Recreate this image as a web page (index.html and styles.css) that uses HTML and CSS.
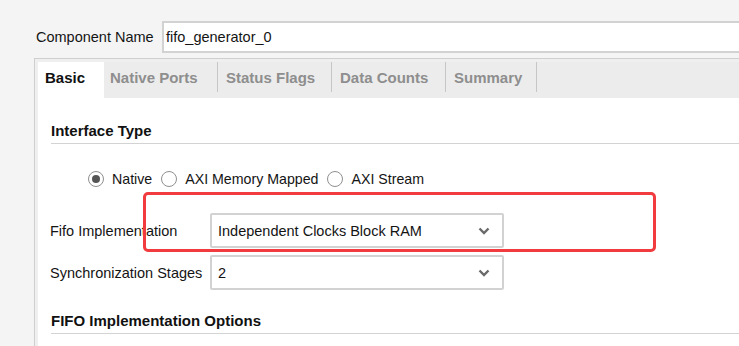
FILE: index.html
```html
<!DOCTYPE html>
<html lang="en">
<head>
  <meta charset="UTF-8">
  <title>FIFO Generator - Customize IP</title>
  <link rel="stylesheet" href="styles.css">
</head>
<body>
<div class="page">
  <!-- Component name -->
  <div class="name-row">
    <label class="name-label" for="compName">Component Name</label>
    <div class="name-input">fifo_generator_0</div>
  </div>

  <!-- Tabbed panel -->
  <div class="panel">
    <div class="tabs">
      <div class="tab active">Basic</div>
      <div class="tab">Native Ports</div>
      <div class="tab">Status Flags</div>
      <div class="tab">Data Counts</div>
      <div class="tab last">Summary</div>
    </div>

    <div class="tab-body">
      <h2 class="section-title">Interface Type</h2>

      <div class="radio-row">
        <label class="radio-item"><span class="radio checked"></span>Native</label>
        <label class="radio-item"><span class="radio"></span>AXI Memory Mapped</label>
        <label class="radio-item"><span class="radio"></span>AXI Stream</label>
      </div>

      <div class="form-grid">
        <div class="form-label">Fifo Implementation</div>
        <div class="select">
          <span>Independent Clocks Block RAM</span>
          <svg class="chevron" width="12" height="8" viewBox="0 0 12 8"><polyline points="1.5,1.5 6,6 10.5,1.5" fill="none" stroke="#6a6a6a" stroke-width="2.4"/></svg>
        </div>

        <div class="form-label">Synchronization Stages</div>
        <div class="select">
          <span>2</span>
          <svg class="chevron" width="12" height="8" viewBox="0 0 12 8"><polyline points="1.5,1.5 6,6 10.5,1.5" fill="none" stroke="#6a6a6a" stroke-width="2.4"/></svg>
        </div>
      </div>

      <h2 class="section-title second">FIFO Implementation Options</h2>
    </div>
  </div>

  <!-- highlight annotation -->
  <div class="highlight"></div>
</div>
</body>
</html>
```

FILE: styles.css
```css
* {
  margin: 0;
  padding: 0;
  box-sizing: border-box;
  font-family: 'Liberation Sans', Arial, sans-serif;
}

body {
  background-color: #f4f4f4;
  color: #141414;
  font-size: 14.5px;
}

.page {
  width: 739px;
  height: 346px;
  overflow: hidden;
  position: relative;
}

/* Component name row */
.name-row {
  display: flex;
  align-items: flex-start;
  padding: 21px 0 0 36px;
  height: 58px;
  margin-right: -20px;
}

.name-label {
  flex-shrink: 0;
  line-height: 32px;
  width: 126px;
}

.name-input {
  flex: 1;
  height: 32px;
  line-height: 28px;
  border: 2px solid #d2d2d2;
  border-right: none;
  background: #fff;
  padding: 0 2px;
  color: #141414;
}

/* Panel */
.panel {
  margin: 0 -20px 0 34px;
  border-top: 1px solid #cfcfcf;
  border-left: 1px solid #cfcfcf;
  padding: 3px 0 0 3px;
  background-color: #efefef;
  height: 300px;
}

.tabs {
  display: flex;
  align-items: flex-start;
  height: 36px;
  background-color: #ececec;
}

.tab {
  height: 30px;
  padding-left: 8px;
  width: 114px;
  font-size: 15px;
  font-weight: 700;
  color: #8e8e8e;
  line-height: 32px;
  border-right: 1px solid #c6c6c6;
}

.tab.active {
  width: 66px;
  height: 36px;
  padding-left: 7px;
  background-color: #fff;
  color: #111;
  border-right: none;
}

.tab.active + .tab {
  padding-left: 6px;
}

.tab.last {
  width: 91px;
}

.tab-body {
  background-color: #fff;
  height: 260px;
  padding-left: 13px;
}

.section-title {
  font-size: 15px;
  font-weight: 700;
  line-height: 18px;
  padding: 24px 0 3px;
  border-bottom: 1px solid #d3d3d3;
  color: #111;
}

.section-title.second {
  padding-top: 22px;
}

/* Radio buttons */
.radio-row {
  display: flex;
  gap: 9px;
  margin: 25px 0 0 37px;
  line-height: 20px;
  font-size: 14.2px;
}

.radio-item {
  display: flex;
  align-items: center;
}

.radio {
  width: 16px;
  height: 16px;
  border-radius: 50%;
  border: 1px solid #8f8f8f;
  background: #fff;
  margin-right: 8px;
  display: flex;
  align-items: center;
  justify-content: center;
}

.radio.checked::after {
  content: "";
  width: 8px;
  height: 8px;
  border-radius: 50%;
  background-color: #555;
}

/* Form fields */
.form-grid {
  display: grid;
  grid-template-columns: 160px 294px;
  row-gap: 7px;
  margin: 24px 0 0 -1px;
  align-items: center;
}

.select {
  height: 35px;
  border: 2px solid #d2d2d2;
  border-radius: 2px;
  display: flex;
  align-items: center;
  justify-content: space-between;
  padding: 0 12px 0 6px;
}

.chevron {
  display: block;
}

/* Red annotation box */
.highlight {
  position: absolute;
  left: 143px;
  top: 192px;
  width: 513px;
  height: 60px;
  border: 3px solid #f23b3f;
  border-radius: 5px;
}
```
